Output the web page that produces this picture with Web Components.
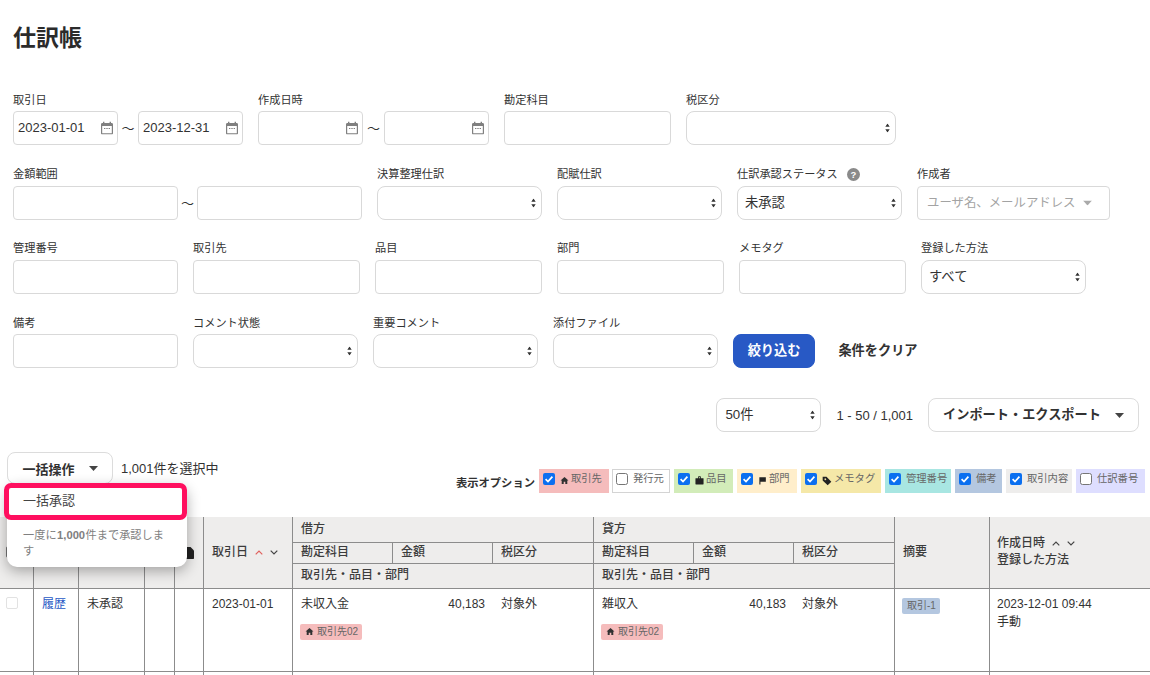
<!DOCTYPE html>
<html lang="ja">
<head>
<meta charset="utf-8">
<title>仕訳帳</title>
<style>
  html, body { margin: 0; padding: 0; background: #fff; }
  body {
    width: 1150px; height: 675px; overflow: hidden;
    font-family: "Liberation Sans", "Noto Sans CJK JP", sans-serif;
    color: #323232;
  }
</style>
</head>
<body>
<journal-page></journal-page>

<script>
(function () {
  const FONT = '"Liberation Sans", "Noto Sans CJK JP", sans-serif';

  const ICONS = {
    home: '<svg viewBox="0 0 10 10" width="9" height="9"><path fill="#323232" d="M5 1 .6 5h1.3v4h2.2V6.4h1.8V9h2.2V5h1.3z"/></svg>',
    bag: '<svg viewBox="0 0 10 10" width="9" height="9"><path fill="#222" d="M3.400 2.500V1.400C3.400.8 3.900.4 4.500.4h1c.6 0 1.100.4 1.100 1v1.100H9c.3 0 .5.2.5.5v6c0 .3-.2.5-.5.500H1c-.3 0-.5-.2-.5-.5V3c0-.3.2-.5.5-.5zm.9 0h1.400V1.300H4.300z"/></svg>',
    flag: '<svg viewBox="0 0 10 10" width="9" height="9"><path fill="#222" d="M1.500 1.500h7.200v5H2.700v3H1.500z"/></svg>',
    tag: '<svg viewBox="0 0 12 12" width="10" height="10"><path fill="#222" d="M.8 1h4.600l5.800 5.800-4.400 4.400L.8 5.400zM3 4a1 1 0 1 0 0-.01z"/></svg>'
  };

  class FmField extends HTMLElement {
    constructor() {
      super();
      this.attachShadow({ mode: 'open' });
      this.shadowRoot.innerHTML = `
        <style>
          :host { display: block; flex: none; }
          .lab { display: flex; align-items: center; height: 14px; margin-bottom: var(--lab-gap, 5px); font-size: 11.200px; line-height: 14px; color: #323232; white-space: nowrap; }
          .body { display: flex; align-items: center; }
        </style>
        <div class="lab"><slot name="label"></slot></div>
        <div class="body"><slot></slot></div>
      `;
    }
  }

  class FmTilde extends HTMLElement {
    constructor() {
      super();
      this.attachShadow({ mode: 'open' });
      this.shadowRoot.innerHTML = `
        <style>:host { display: block; flex: none; width: var(--w, 20px); padding-bottom: 2px; text-align: center; font-size: 13px; color: #323232; }</style>
        <span>〜</span>`;
    }
  }

  class FmBox extends HTMLElement {
    constructor() {
      super();
      this.attachShadow({ mode: 'open' });
    }
    connectedCallback() {
      const kind = this.getAttribute('kind') || 'text';
      const radius = kind === 'select' ? 8 : 4;
      let tail = '';
      if (kind === 'select') {
        tail = '<svg class="tail" style="right:5px" width="5" height="9" viewBox="0 0 5 9"><path fill="#333" d="M2.500 0 4.700 3.200H.3zM2.500 9 .3 5.800h4.400z"/></svg>';
      } else if (kind === 'date') {
        tail = '<svg class="tail" style="right:4px" width="12" height="13" viewBox="0 0 12 13"><path fill="#808080" d="M2 0h1.400v1.500h5.200V0H10v1.500h.7c.7 0 1.300.6 1.300 1.300v8.900c0 .7-.6 1.300-1.300 1.300H1.300C.6 13 0 12.400 0 11.700V2.800c0-.7.6-1.300 1.300-1.300H2zM1.200 4.500v7c0 .2.100.3.300.3h9c.2 0 .3-.1.300-.3v-7z"/><path fill="#808080" d="M3 6.400h1.400v1H3zM5.300 6.400h1.400v1H5.300zM7.600 6.400H9v1H7.600z"/></svg>';
      } else if (kind === 'combo') {
        tail = '<svg class="tail" style="right:17px" width="9" height="5" viewBox="0 0 9 5"><path fill="#aaa" d="M0 0h9L4.500 5z"/></svg>';
      }
      const size = { date: 13, select: 13.3, combo: 12.4 }[kind] || 13;
      const pad = { date: 4, select: 7, combo: 9 }[kind] || 8;
      this.shadowRoot.innerHTML = `
        <style>
          :host { display: block; flex: none; box-sizing: border-box; position: relative; height: 34px; width: var(--w, 165px);
            background: #fff; border: 1px solid #d9d9d9; border-radius: ${radius}px; }
          .val { display: block; padding-left: var(--pad, ${pad}px); line-height: 32px; font-size: ${size}px; color: #323232; white-space: nowrap; }
          :host([kind="combo"]) .val { color: #a3a3a3; }
          .tail { position: absolute; top: 50%; transform: translateY(-50%); }
        </style>
        <span class="val"><slot></slot></span>${tail}`;
    }
  }

  class FmRow extends HTMLElement {
    constructor() {
      super();
      this.attachShadow({ mode: 'open' });
      this.shadowRoot.innerHTML = `
        <style>:host { display: flex; align-items: flex-end; gap: 15px; padding-left: 13px; }</style>
        <slot></slot>`;
    }
  }

  class FmButton extends HTMLElement {
    constructor() {
      super();
      this.attachShadow({ mode: 'open' });
      const caret = this.hasAttribute('caret')
        ? '<svg class="caret" width="9" height="5" viewBox="0 0 9 5"><path fill="#444" d="M0 0h9L4.500 5z"/></svg>' : '';
      this.shadowRoot.innerHTML = `
        <style>
          :host { display: inline-flex; flex: none; box-sizing: border-box; align-items: center; justify-content: center; height: 34px;
            width: var(--w, auto); padding-bottom: var(--pb, 3px); background: #fff; border: 1px solid #dcdcdc; border-radius: 8px;
            font-size: 13.200px; font-weight: 700; color: #323232; white-space: nowrap; }
          :host([variant="primary"]) { background: #2859c5; border-color: #2859c5; color: #fff; }
          :host([variant="plain"]) { background: transparent; border-color: transparent; }
          .caret { margin-left: 14px; margin-top: var(--pb, 3px); }
        </style>
        <slot></slot>${caret}`;
    }
  }

  class OptChip extends HTMLElement {
    constructor() {
      super();
      this.attachShadow({ mode: 'open' });
    }
    connectedCallback() {
      const on = this.hasAttribute('checked');
      const icon = ICONS[this.getAttribute('icon')] || '';
      const box = on
        ? '<svg width="12" height="12" viewBox="0 0 12 12"><rect width="12" height="12" rx="2" fill="#0b6ff0"/><path d="M2.600 6.200 5 8.600l4.400-5" fill="none" stroke="#fff" stroke-width="1.700"/></svg>'
        : '<svg width="12" height="12" viewBox="0 0 12 12"><rect x=".5" y=".5" width="11" height="11" rx="2" fill="#fff" stroke="#767676"/></svg>';
      this.shadowRoot.innerHTML = `
        <style>
          :host { display: flex; flex: none; box-sizing: border-box; align-items: flex-start; height: 24px; padding: 4px 0 0 4px;
            width: var(--w); background: var(--bg, #fff); font-size: 10.300px; line-height: 12px; color: #666; white-space: nowrap; }
          :host([outlined]) { border: 1px solid #d4d4d4; padding: 3px 0 0 3px; }
          .box { display: flex; flex: none; margin-right: 5px; }
          .ic { display: flex; flex: none; margin: 3px 2px 0 0; }
        </style>
        <span class="box">${box}</span>${icon ? `<span class="ic">${icon}</span>` : ''}<slot></slot>`;
    }
  }

  class TagPill extends HTMLElement {
    constructor() {
      super();
      this.attachShadow({ mode: 'open' });
    }
    connectedCallback() {
      const icon = ICONS[this.getAttribute('icon')] || '';
      this.shadowRoot.innerHTML = `
        <style>
          :host { display: inline-flex; align-items: center; height: 16px; padding: 0 4px 0 5px; margin-left: -1px; border-radius: 2px;
            background: var(--bg, #f5bcbc); font-size: 10px; color: #666; white-space: nowrap; }
          svg { margin-right: 3px; display: block; }
        </style>
        ${icon}<slot></slot>`;
    }
  }

  class SortArrows extends HTMLElement {
    constructor() {
      super();
      this.attachShadow({ mode: 'open' });
      const up = this.getAttribute('active') === 'up' ? '#e0605c' : '#444';
      this.shadowRoot.innerHTML = `
        <style>:host { display: inline-flex; gap: 7px; margin-left: 7px; vertical-align: 1px; align-items: center; }</style>
        <svg width="8" height="5" viewBox="0 0 8 5"><path d="M.7 4.300 4 1l3.300 3.300" fill="none" stroke="${up}" stroke-width="1.200"/></svg>
        <svg width="8" height="5" viewBox="0 0 8 5"><path d="M.7.700 4 4 7.300.700" fill="none" stroke="#444" stroke-width="1.200"/></svg>`;
    }
  }

  class BulkMenu extends HTMLElement {
    constructor() {
      super();
      this.attachShadow({ mode: 'open' });
      this.shadowRoot.innerHTML = `
        <style>
          :host { display: block; position: absolute; left: 7px; top: 484px; width: 180px; height: 83px; box-sizing: border-box;
            background: #fff; border-radius: 10px; box-shadow: 0 4px 14px rgba(0,0,0,.32); z-index: 5; }
          .hit { position: absolute; left: -3px; top: -1px; width: 183px; height: 37px; box-sizing: border-box;
            border: 5px solid #ff0f5f; border-radius: 7px; background: #fff;
            padding-left: 14px; font-size: 13px; line-height: 26px; color: #444; }
          .note { position: absolute; left: 16px; top: 43px; width: 147px; font-size: 11.200px; line-height: 16px; color: #808080; white-space: nowrap; }
          b { font-weight: 700; margin: 0 .5px; }
        </style>
        <div class="hit">一括承認</div>
        <div class="note">一度に<b>1,000</b>件まで承認しま<br>す</div>`;
    }
  }

  class JournalTable extends HTMLElement {
    constructor() {
      super();
      this.attachShadow({ mode: 'open' });
      this.shadowRoot.innerHTML = `
        <style>
          :host { display: block; margin-left: -1px; }
          table { border-collapse: collapse; table-layout: fixed; width: 1151px; font-size: 12px; color: #323232; }
          th, td { border: 1px solid #8c8c8c; padding: 0 8px; text-align: left; box-sizing: border-box; }
          thead tr:first-child th { border-top: 0; }
          th { background: #eeedec; font-weight: 500; color: #3c3c3c; font-size: 12px; line-height: 17px; }
          th.r0 { height: 25px; }
          th.r1 { height: 21px; }
          th.r2 { height: 25px; }
          td { vertical-align: top; padding-top: 6px; height: 83px; line-height: 18px; }
          .chk { display: block; width: 12px; height: 12px; border: 1px solid #e2e2e2; border-radius: 2px; box-sizing: border-box; margin: 2px 0 0 -2px; }
          .chk.head { border-color: #767676; background: #fff; margin: 0 0 0 -2px; }
          a { color: #2859c5; text-decoration: none; }
          .line { display: flex; white-space: nowrap; }
          .line .name { flex: none; width: 91px; }
          .line .amt { flex: none; width: 93px; text-align: right; }
          .line .tax { margin-left: 16px; }
          .tags { margin-top: 11px; display: flex; }
          .memo { margin-top: 3px; display: flex; }
          .stamp { vertical-align: middle; }
          .last { padding-left: 7px; }
        </style>
        <table>
          <colgroup>
            <col style="width:34px"><col style="width:45px"><col style="width:66px"><col style="width:30px"><col style="width:29px">
            <col style="width:89px"><col style="width:100px"><col style="width:100px"><col style="width:101px">
            <col style="width:100px"><col style="width:100px"><col style="width:101px"><col style="width:95px"><col style="width:161px">
          </colgroup>
          <thead>
            <tr>
              <th class="r0" rowspan="3"><span class="chk head"></span></th>
              <th rowspan="3"></th>
              <th rowspan="3"></th>
              <th rowspan="3"></th>
              <th rowspan="3" style="padding:0 0 0 10px"><svg class="stamp" width="9" height="12" viewBox="0 0 9 12"><path fill="#222" d="M1 0h4.500L9 3.500V11c0 .6-.4 1-1 1H1c-.6 0-1-.4-1-1V1c0-.6.4-1 1-1z"/></svg></th>
              <th rowspan="3">取引日<sort-arrows active="up"></sort-arrows></th>
              <th class="r0" colspan="3">借方</th>
              <th colspan="3">貸方</th>
              <th rowspan="3">摘要</th>
              <th rowspan="3" class="last">作成日時<sort-arrows></sort-arrows><br>登録した方法</th>
            </tr>
            <tr>
              <th class="r1">勘定科目</th><th>金額</th><th>税区分</th>
              <th>勘定科目</th><th>金額</th><th>税区分</th>
            </tr>
            <tr>
              <th class="r2" colspan="3">取引先・品目・部門</th>
              <th colspan="3">取引先・品目・部門</th>
            </tr>
          </thead>
          <tbody>
            <tr>
              <td><span class="chk"></span></td>
              <td><a href="#">履歴</a></td>
              <td>未承認</td>
              <td></td>
              <td></td>
              <td>2023-01-01</td>
              <td colspan="3">
                <div class="line"><span class="name">未収入金</span><span class="amt">40,183</span><span class="tax">対象外</span></div>
                <div class="tags"><tag-pill icon="home">取引先02</tag-pill></div>
              </td>
              <td colspan="3">
                <div class="line"><span class="name">雑収入</span><span class="amt">40,183</span><span class="tax">対象外</span></div>
                <div class="tags"><tag-pill icon="home">取引先02</tag-pill></div>
              </td>
              <td><div class="memo"><tag-pill style="--bg:#b4c7e0">取引-1</tag-pill></div></td>
              <td class="last">2023-12-01 09:44<br>手動</td>
            </tr>
            <tr><td></td><td></td><td></td><td></td><td></td><td></td><td colspan="3"></td><td colspan="3"></td><td></td><td></td></tr>
          </tbody>
        </table>`;
    }
  }

  class JournalPage extends HTMLElement {
    constructor() {
      super();
      this.attachShadow({ mode: 'open' });
      this.shadowRoot.innerHTML = `
        <style>
          :host { display: block; position: relative; width: 1150px; height: 675px; overflow: hidden; font-family: ${FONT}; color: #323232; }
          h1 { margin: 0; padding: 24px 0 0 13px; height: 69px; box-sizing: border-box; font-size: 23px; line-height: 28px; font-weight: 700; color: #2b2b2b; }
          .filters { display: flex; flex-direction: column; height: 283px; box-sizing: border-box; padding-top: 24px; }
          .filters fm-row + fm-row { margin-top: 21px; }
          .pager { display: flex; align-items: center; justify-content: flex-end; height: 34px; padding-right: 11px; margin-top: 46px; font-size: 13px; }
          .pager .count { margin: 0 15px 0 15px; }
          .bar { display: flex; height: 85px; justify-content: space-between; padding: 20px 5px 0 7px; box-sizing: border-box; }
          .bulk { display: flex; align-items: center; height: 32px; font-size: 13px; }
          .bulk span { margin: -2px 0 0 8px; }
          .opts { display: flex; gap: 4px; align-items: flex-start; margin-top: 17px; height: 24px; }
          .opts b { font-size: 11.300px; font-weight: 700; margin-right: 0; line-height: 28px; color: #323232; }
        </style>
        <h1>仕訳帳</h1>
        <div class="filters">
          <fm-row style="--lab-gap:4px;margin-bottom:1px">
            <fm-field style="width:230px"><span slot="label">取引日</span>
              <fm-box kind="date" style="--w:105px">2023-01-01</fm-box><fm-tilde></fm-tilde><fm-box kind="date" style="--w:105px">2023-12-31</fm-box></fm-field>
            <fm-field style="width:231px"><span slot="label">作成日時</span>
              <fm-box kind="date" style="--w:105px"></fm-box><fm-tilde style="--w:21px"></fm-tilde><fm-box kind="date" style="--w:105px"></fm-box></fm-field>
            <fm-field><span slot="label">勘定科目</span><fm-box style="--w:167px"></fm-box></fm-field>
            <fm-field><span slot="label">税区分</span><fm-box kind="select" style="--w:210px"></fm-box></fm-field>
          </fm-row>
          <fm-row>
            <fm-field style="width:349px"><span slot="label">金額範囲</span>
              <fm-box style="--w:165px"></fm-box><fm-tilde style="--w:19px"></fm-tilde><fm-box style="--w:165px"></fm-box></fm-field>
            <fm-field><span slot="label">決算整理仕訳</span><fm-box kind="select"></fm-box></fm-field>
            <fm-field><span slot="label">配賦仕訳</span><fm-box kind="select"></fm-box></fm-field>
            <fm-field><span slot="label">仕訳承認ステータス<svg style="margin-left:9px;vertical-align:-3px" width="13" height="13" viewBox="0 0 13 13"><circle cx="6.500" cy="6.500" r="6.500" fill="#8a8a8a"/><text x="6.500" y="10" text-anchor="middle" font-size="9.500" font-weight="700" fill="#fff" font-family="Liberation Sans">?</text></svg></span><fm-box kind="select">未承認</fm-box></fm-field>
            <fm-field><span slot="label">作成者</span><fm-box kind="combo" style="--w:193px">ユーザ名、メールアドレス</fm-box></fm-field>
          </fm-row>
          <fm-row>
            <fm-field><span slot="label">管理番号</span><fm-box></fm-box></fm-field>
            <fm-field><span slot="label">取引先</span><fm-box style="--w:167px"></fm-box></fm-field>
            <fm-field><span slot="label">品目</span><fm-box style="--w:167px"></fm-box></fm-field>
            <fm-field><span slot="label">部門</span><fm-box style="--w:167px"></fm-box></fm-field>
            <fm-field><span slot="label">メモタグ</span><fm-box style="--w:167px"></fm-box></fm-field>
            <fm-field><span slot="label">登録した方法</span><fm-box kind="select">すべて</fm-box></fm-field>
          </fm-row>
          <fm-row style="--lab-gap:4px;margin-top:22px">
            <fm-field><span slot="label">備考</span><fm-box></fm-box></fm-field>
            <fm-field><span slot="label">コメント状態</span><fm-box kind="select"></fm-box></fm-field>
            <fm-field><span slot="label">重要コメント</span><fm-box kind="select"></fm-box></fm-field>
            <fm-field><span slot="label">添付ファイル</span><fm-box kind="select"></fm-box></fm-field>
            <fm-button variant="primary" style="--w:82px">絞り込む</fm-button>
            <fm-button variant="plain" style="--w:102px;margin-left:-3px">条件をクリア</fm-button>
          </fm-row>
        </div>
        <div class="pager">
          <fm-box kind="select" style="--w:105px;--pad:8px">50件</fm-box>
          <span class="count">1 - 50 / 1,001</span>
          <fm-button caret style="--w:211px">インポート・エクスポート</fm-button>
        </div>
        <div class="bar">
          <div class="bulk">
            <fm-button caret style="--w:106px;--pb:0px;height:32px;font-size:13px">一括操作</fm-button>
            <span>1,001件を選択中</span>
          </div>
          <div class="opts">
            <b>表示オプション</b>
            <opt-chip checked icon="home" style="--w:70px;--bg:#f5bcbc">取引先</opt-chip>
            <opt-chip outlined style="--w:58px;margin-left:-1px">発行元</opt-chip>
            <opt-chip checked icon="bag" style="--w:59px;--bg:#d2ecb9">品目</opt-chip>
            <opt-chip checked icon="flag" style="--w:60px;--bg:#ffeecb">部門</opt-chip>
            <opt-chip checked icon="tag" style="--w:80px;--bg:#f5e8a8">メモタグ</opt-chip>
            <opt-chip checked style="--w:66px;--bg:#a8e6e2">管理番号</opt-chip>
            <opt-chip checked style="--w:47px;--bg:#b4c7e0">備考</opt-chip>
            <opt-chip checked style="--w:66px;--bg:#eeedec">取引内容</opt-chip>
            <opt-chip style="--w:69px;--bg:#dedeff">仕訳番号</opt-chip>
          </div>
        </div>
        <journal-table></journal-table>
        <bulk-menu></bulk-menu>
      `;
    }
  }

  customElements.define('fm-field', FmField);
  customElements.define('fm-tilde', FmTilde);
  customElements.define('fm-box', FmBox);
  customElements.define('fm-row', FmRow);
  customElements.define('fm-button', FmButton);
  customElements.define('opt-chip', OptChip);
  customElements.define('tag-pill', TagPill);
  customElements.define('sort-arrows', SortArrows);
  customElements.define('bulk-menu', BulkMenu);
  customElements.define('journal-table', JournalTable);
  customElements.define('journal-page', JournalPage);
})();
</script>
</body>
</html>
